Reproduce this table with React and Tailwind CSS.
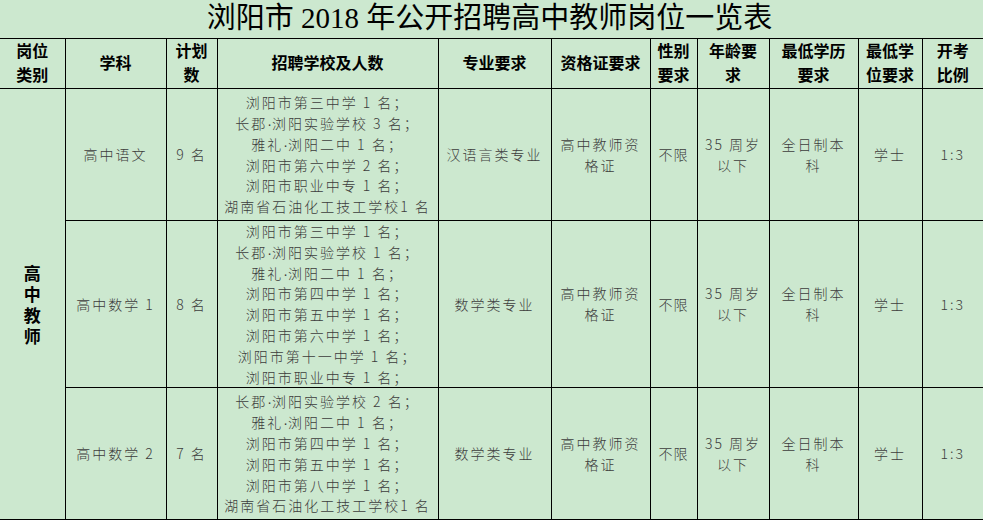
import React from "react";

const body = { fontFamily: '"Liberation Sans", "Noto Sans CJK SC", sans-serif' };
const light = { fontFamily: '"Noto Sans CJK SC", "Liberation Sans", sans-serif' };
const dotFont = { fontFamily: '"Liberation Sans", sans-serif' };

const headers = [
  ["岗位", "类别"],
  ["学科"],
  ["计划", "数"],
  ["招聘学校及人数"],
  ["专业要求"],
  ["资格证要求"],
  ["性别", "要求"],
  ["年龄要", "求"],
  ["最低学历", "要求"],
  ["最低学", "位要求"],
  ["开考", "比例"],
];

const rows = [
  {
    h: "h-[132px]",
    subject: "高中语文",
    count: "9 名",
    schools: [
      "浏阳市第三中学 1 名；",
      "长郡·浏阳实验学校 3 名；",
      "雅礼·浏阳二中 1 名；",
      "浏阳市第六中学 2 名；",
      "浏阳市职业中专 1 名；",
      "湖南省石油化工技工学校1 名",
    ],
    major: "汉语言类专业",
  },
  {
    h: "h-[167px]",
    subject: "高中数学 1",
    count: "8 名",
    schools: [
      "浏阳市第三中学 1 名；",
      "长郡·浏阳实验学校 1 名；",
      "雅礼·浏阳二中 1 名；",
      "浏阳市第四中学 1 名；",
      "浏阳市第五中学 1 名；",
      "浏阳市第六中学 1 名；",
      "浏阳市第十一中学 1 名；",
      "浏阳市职业中专 1 名；",
    ],
    major: "数学类专业",
  },
  {
    h: "h-[132px]",
    subject: "高中数学 2",
    count: "7 名",
    schools: [
      "长郡·浏阳实验学校 2 名；",
      "雅礼·浏阳二中 1 名；",
      "浏阳市第四中学 1 名；",
      "浏阳市第五中学 1 名；",
      "浏阳市第八中学 1 名；",
      "湖南省石油化工技工学校1 名",
    ],
    major: "数学类专业",
  },
];

const cell = "border-[1.5px] border-black text-center align-middle p-0";

function Lines({ items }) {
  return items.map((t, i) => <div key={i}>{t}</div>);
}

function School({ text }) {
  const parts = text.split("·");
  return (
    <div className="h-[20.8px] flex items-center justify-center">
      {parts.length === 1 ? (
        <span>{text}</span>
      ) : (
        <span>
          {parts[0]}
          <span className="tracking-normal leading-none" style={dotFont}>·</span>
          {parts[1]}
        </span>
      )}
    </div>
  );
}

export default function App() {
  return (
    <div className="w-[983px] h-[520px] bg-[#cce8cf] overflow-hidden" style={body}>
      <div
        className="h-[38px] flex items-center justify-center text-[29px] text-black leading-none pb-[2px] pr-[4px]"
        style={{ fontFamily: '"Liberation Serif", "Noto Sans CJK SC", serif' }}
      >
        浏阳市 2018 年公开招聘高中教师岗位一览表
      </div>
      <table className="table-fixed border-collapse w-[983px]">
        <colgroup>
          <col className="w-[65px]" />
          <col className="w-[101px]" />
          <col className="w-[51px]" />
          <col className="w-[221px]" />
          <col className="w-[113px]" />
          <col className="w-[99px]" />
          <col className="w-[47px]" />
          <col className="w-[72px]" />
          <col className="w-[89px]" />
          <col className="w-[64px]" />
          <col className="w-[61px]" />
        </colgroup>
        <thead>
          <tr className="h-[50px]">
            {headers.map((h, i) => (
              <th
                key={i}
                className={`${cell} font-bold text-[16px] leading-[24px] text-black ${i === 0 ? "border-l-0" : ""} ${i === headers.length - 1 ? "border-r-0" : ""}`}
              >
                <Lines items={h} />
              </th>
            ))}
          </tr>
        </thead>
        <tbody className="text-[14px] leading-[20.8px] text-[#3c3c3c] font-light tracking-[2px]" style={light}>
          {rows.map((r, idx) => (
            <tr key={idx} className={r.h}>
              {idx === 0 && (
                <td rowSpan={3} className={`${cell} border-l-0 font-bold text-[17px] leading-[21px] text-black tracking-normal`}>
                  <div className="flex flex-col items-center">
                    {["高", "中", "教", "师"].map((c) => (
                      <span key={c} className="block h-[21px]">{c}</span>
                    ))}
                  </div>
                </td>
              )}
              <td className={cell}>{r.subject}</td>
              <td className={cell}>{r.count}</td>
              <td className={`${cell} whitespace-nowrap`}>
                {r.schools.map((s, i) => (
                  <School key={i} text={s} />
                ))}
              </td>
              <td className={cell}>{r.major}</td>
              <td className={cell}>
                <Lines items={["高中教师资", "格证"]} />
              </td>
              <td className={`${cell} tracking-[1px]`}>不限</td>
              <td className={cell}>
                <Lines items={["35 周岁", "以下"]} />
              </td>
              <td className={cell}>
                <Lines items={["全日制本", "科"]} />
              </td>
              <td className={cell}>学士</td>
              <td className={`${cell} border-r-0`}>1:3</td>
            </tr>
          ))}
        </tbody>
      </table>
    </div>
  );
}
